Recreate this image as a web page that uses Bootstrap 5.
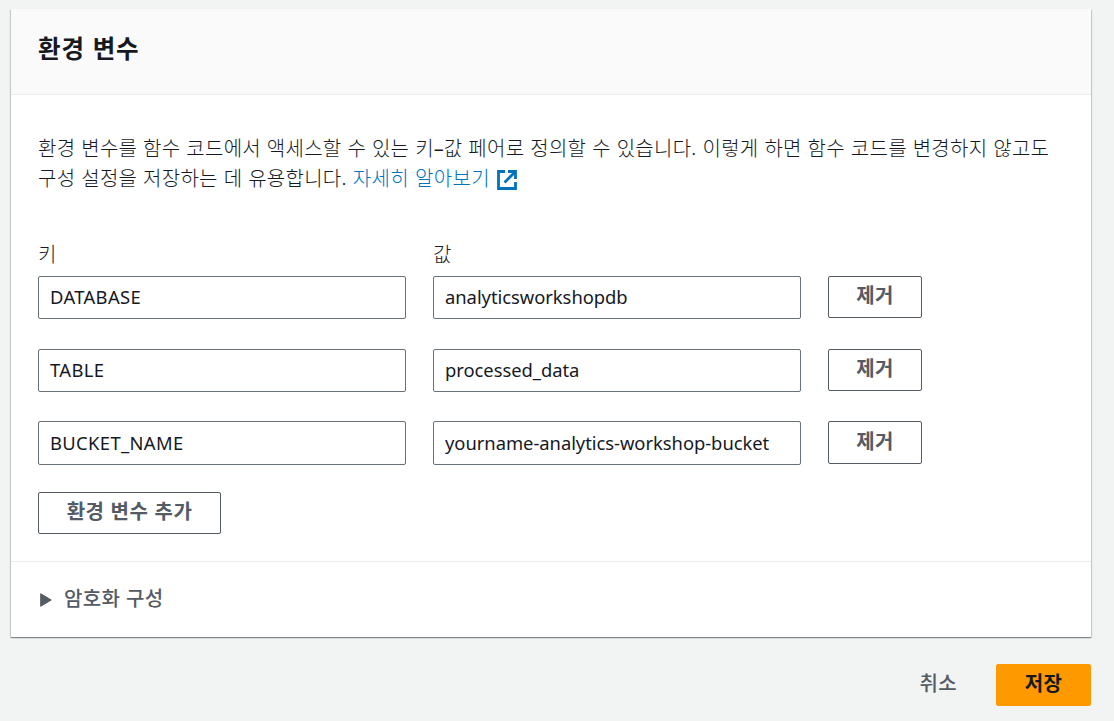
<!DOCTYPE html>
<html lang="ko">
<head>
<meta charset="utf-8">
<meta name="viewport" content="width=device-width, initial-scale=1">
<title>환경 변수</title>
<link rel="stylesheet" href="https://cdn.jsdelivr.net/npm/bootstrap@5.3.0/dist/css/bootstrap.min.css">
<style>
  body { background: #f2f3f3; color: #16191f; font-family: "Noto Sans", "Noto Sans CJK KR", sans-serif; font-size: 19px; overflow: hidden; }
  .page { padding: 9px 23px 0 11px; }
  .panel { background: #fff; height: 628px; box-shadow: 0 1px 1px 0 rgba(0,28,36,.3), 1px 1px 1px 0 rgba(0,28,36,.15), -1px 1px 1px 0 rgba(0,28,36,.15); }
  .panel-head { height: 86px; background: #fafafa; border-bottom: 1px solid #eaeded; padding: 23px 27px 0; }
  .ko { font-family: "Noto Sans CJK KR", sans-serif; }
  .latin { font-family: "Noto Sans", sans-serif; font-weight: 400; letter-spacing: 0; line-height: 1; }
  .panel-head h1 { font-size: 24.5px; line-height: 32px; font-weight: 700; letter-spacing: .9px; margin: 0; }
  .panel-body { height: 466px; padding: 38px 27px 0; }
  .intro { font-size: 20px; line-height: 30px; font-weight: 300; height: 60px; letter-spacing: .27px; }
  .intro a { color: #0073bb; text-decoration: none; letter-spacing: .35px; }
  .intro svg { vertical-align: -4px; margin-left: 1px; }
  .vars { display: grid; grid-template-columns: 368px 368px 94px; column-gap: 27px; margin-top: 45px; }
  .vars-label { font-size: 20px; line-height: 32px; font-weight: 300; height: 38px; }
  .vars .form-control { height: 43px; border: 1px solid #687078; border-radius: 2px; padding: 0 11px 2px; font-size: 18.4px; color: #16191f; letter-spacing: -.04px; }
  .vars .key-input { letter-spacing: .35px; }
  .var-row { height: 73px; }
  .var-row.mid-row { height: 72px; }
  .var-row.last-row { height: 71px; }
  .vars .last-row .form-control { height: 44px; padding-bottom: 1px; }
  .btn.act { height: 42px; border: 1px solid #545b64; border-radius: 2px; padding: 0 27px; color: #545b64; font-weight: 700; font-size: 20px; line-height: 36px; padding-bottom: 4px; white-space: nowrap; letter-spacing: .4px; }
  .last-row .btn.act { height: 43px; }
  .btn.add { width: 183px; letter-spacing: .5px; }
  .btn.save { background: #f90; border-color: #f90; color: #16191f; width: 95px; }
  .btn.plain { border-color: transparent; font-weight: 500; }
  .expand { height: 76px; border-top: 1px solid #eaeded; padding: 0 29px; color: #545b64; font-weight: 500; font-size: 20px; letter-spacing: .3px; }
  .expand span { margin: -4px 0 0 12px; }
  .actions { padding-top: 27px; gap: 11px; }
</style>
</head>
<body>
<main class="page">
  <section class="panel">
    <header class="panel-head ko"><h1>환경 변수</h1></header>
    <div class="panel-body">
      <p class="intro ko mb-0 text-nowrap">환경 변수를 함수 코드에서 액세스할 수 있는 키<span class="latin">–</span>값 페어로 정의할 수 있습니다. 이렇게 하면 함수 코드를 변경하지 않고도<br>구성 설정을 저장하는 데 유용합니다. <a href="#">자세히 알아보기</a>
        <svg width="20" height="20" viewBox="0 0 20 20" fill="none" stroke="#0073bb" stroke-width="2.8"><path d="M8 1.5H1.5v17h17V12M11 1.5h7.5V9M18 2 7.5 12.5"/></svg></p>
      <div class="vars">
        <div class="vars-label ko">키</div><div class="vars-label ko">값</div><div></div>
        <div class="var-row"><input class="form-control key-input" value="DATABASE"></div>
        <div class="var-row"><input class="form-control" value="analyticsworkshopdb"></div>
        <div class="var-row"><button class="btn act ko w-100">제거</button></div>
        <div class="var-row mid-row"><input class="form-control key-input" value="TABLE"></div>
        <div class="var-row mid-row"><input class="form-control" value="processed_data"></div>
        <div class="var-row mid-row"><button class="btn act ko w-100">제거</button></div>
        <div class="var-row last-row"><input class="form-control key-input" value="BUCKET_NAME"></div>
        <div class="var-row last-row"><input class="form-control" value="yourname-analytics-workshop-bucket"></div>
        <div class="var-row last-row"><button class="btn act ko w-100">제거</button></div>
      </div>
      <button class="btn act ko add">환경 변수 추가</button>
    </div>
    <div class="expand ko d-flex align-items-center">
      <svg width="12" height="14" viewBox="0 0 12 14"><path d="M.7.7v12.6L11.2 7z" fill="#545b64" stroke="#545b64" stroke-linejoin="round"/></svg><span>암호화 구성</span>
    </div>
  </section>
  <div class="actions d-flex justify-content-end">
    <button class="btn act plain ko">취소</button>
    <button class="btn act save ko">저장</button>
  </div>
</main>
<script src="https://cdn.jsdelivr.net/npm/bootstrap@5.3.0/dist/js/bootstrap.bundle.min.js"></script>
</body>
</html>
